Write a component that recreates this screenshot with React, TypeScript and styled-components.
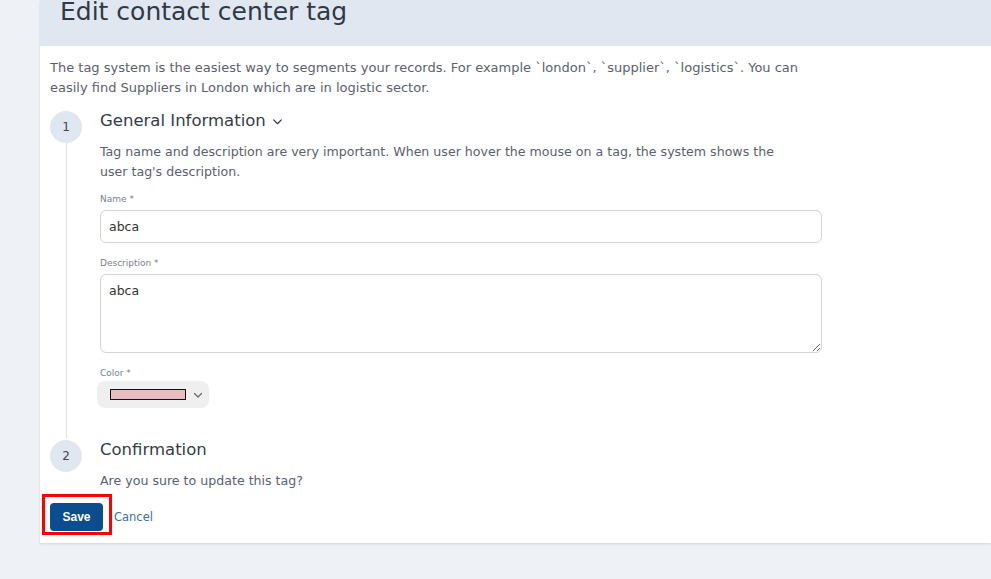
import React, { useState } from "react";
import styled, { createGlobalStyle } from "styled-components";

const GlobalStyle = createGlobalStyle`
    html, body {
        margin: 0;
        padding: 0;
        background: #eef1f6;
        font-family: "DejaVu Sans", "Open Sans", sans-serif;
        color: #5a616c;
    }
    * { box-sizing: border-box; }
`;

const Page = styled.div`
    width: 991px;
    height: 579px;
    overflow: hidden;
    padding-left: 40px;
`;

const Card = styled.div`
    background: #fff;
    height: 543px;
    box-shadow: 0 1px 2px rgba(0, 0, 0, 0.12);
    position: relative;
`;

const Header = styled.div`
    height: 46px;
    background: #e1e7f0;
    padding: 0 20px;

    h1 {
        margin: 0;
        font-size: 25px;
        line-height: 24px;
        font-weight: normal;
        color: #2f3947;
    }
`;

const Body = styled.div`
    padding: 12px 10px 0;
`;

const Intro = styled.p`
    margin: 0 0 11px;
    max-width: 775px;
    font-size: 13px;
    line-height: 20px;
`;

const Step = styled.div<{ last?: boolean }>`
    display: grid;
    grid-template-columns: 32px 1fr;
    column-gap: 18px;
    position: relative;

    &::before {
        content: "";
        display: ${(p) => (p.last ? "none" : "block")};
        position: absolute;
        left: 16px;
        top: 34px;
        bottom: 0;
        width: 1px;
        background: #dde3ec;
    }
`;

const Bullet = styled.div`
    width: 32px;
    height: 32px;
    margin-top: 2px;
    border-radius: 50%;
    background: #e1e7f0;
    color: #3d4450;
    font-size: 12px;
    display: flex;
    align-items: center;
    justify-content: center;
`;

const StepBody = styled.div<{ last?: boolean }>`
    padding-bottom: ${(p) => (p.last ? "0" : "30px")};
    max-width: 722px;
`;

const StepTitle = styled.div`
    font-size: 16.5px;
    line-height: 24px;
    color: #353c47;
    display: flex;
    align-items: center;
    gap: 5px;
`;

const StepText = styled.p`
    margin: 9px 0 0;
    max-width: 700px;
    font-size: 12.6px;
    line-height: 19.5px;
`;

const Label = styled.label`
    display: block;
    font-size: 9px;
    line-height: 12px;
    color: #7b828c;
    margin: 14px 0 5px;

    &:first-of-type {
        margin-top: 12px;
    }
`;

const Input = styled.input`
    display: block;
    width: 100%;
    height: 33px;
    border: 1px solid #d4d4d4;
    border-radius: 6px;
    padding: 0 8px;
    font: inherit;
    font-size: 12.5px;
    color: #333;
    outline: none;
`;

const TextArea = styled.textarea`
    display: block;
    width: 100%;
    height: 79px;
    border: 1px solid #d4d4d4;
    border-radius: 6px;
    padding: 8px 8px;
    font: inherit;
    font-size: 12.5px;
    color: #333;
    outline: none;
`;

const ColorSelect = styled.div`
    display: inline-flex;
    align-items: center;
    gap: 6px;
    margin: -3px 0 0 -3px;
    height: 27px;
    padding: 0 5px 0 13px;
    background: #efefef;
    border-radius: 8px;
`;

const Swatch = styled.span<{ color: string }>`
    width: 76px;
    height: 11px;
    background: ${(p) => p.color};
    border: 1px solid #111;
`;

const Actions = styled.div`
    display: flex;
    align-items: center;
    gap: 11px;
    margin-top: 12px;
    position: relative;
`;

const SaveButton = styled.button`
    width: 53px;
    height: 28px;
    border: none;
    border-radius: 4px;
    background: #0b4d8e;
    color: #fff;
    font-family: "Liberation Sans", Arial, sans-serif;
    font-weight: bold;
    font-size: 12px;
`;

const CancelLink = styled.a`
    font-size: 11.5px;
    color: #3d6fa3;
    cursor: pointer;
`;

const Highlight = styled.div`
    position: absolute;
    left: -8px;
    top: -9px;
    width: 70px;
    height: 41px;
    border: 3px solid #f00;
    pointer-events: none;
`;

const Chevron = ({ size = 12, color = "#444" }: { size?: number; color?: string }) => (
    <svg width={size} height={size} viewBox="0 0 12 12" fill="none">
        <path d="M2.5 4.5 6 8l3.5-3.5" stroke={color} strokeWidth="1.2" strokeLinecap="round" strokeLinejoin="round" />
    </svg>
);

export default function App() {
    const [name, setName] = useState("abca");
    const [description, setDescription] = useState("abca");

    return (
        <Page>
            <GlobalStyle />
            <Card>
                <Header>
                    <h1>Edit contact center tag</h1>
                </Header>
                <Body>
                    <Intro>
                        The tag system is the easiest way to segments your records. For example `london`, `supplier`,
                        `logistics`. You can easily find Suppliers in London which are in logistic sector.
                    </Intro>

                    <Step>
                        <Bullet>1</Bullet>
                        <StepBody>
                            <StepTitle>
                                General Information <Chevron size={13} color="#353c47" />
                            </StepTitle>
                            <StepText>
                                Tag name and description are very important. When user hover the mouse on a tag, the
                                system shows the user tag's description.
                            </StepText>
                            <Label>Name *</Label>
                            <Input value={name} onChange={(e) => setName(e.target.value)} />
                            <Label>Description *</Label>
                            <TextArea value={description} onChange={(e) => setDescription(e.target.value)} />
                            <Label>Color *</Label>
                            <ColorSelect>
                                <Swatch color="#e8bcc0" />
                                <Chevron size={12} color="#666" />
                            </ColorSelect>
                        </StepBody>
                    </Step>

                    <Step last>
                        <Bullet>2</Bullet>
                        <StepBody last>
                            <StepTitle>Confirmation</StepTitle>
                            <StepText>Are you sure to update this tag?</StepText>
                        </StepBody>
                    </Step>

                    <Actions>
                        <SaveButton>Save</SaveButton>
                        <CancelLink>Cancel</CancelLink>
                        <Highlight />
                    </Actions>
                </Body>
            </Card>
        </Page>
    );
}
